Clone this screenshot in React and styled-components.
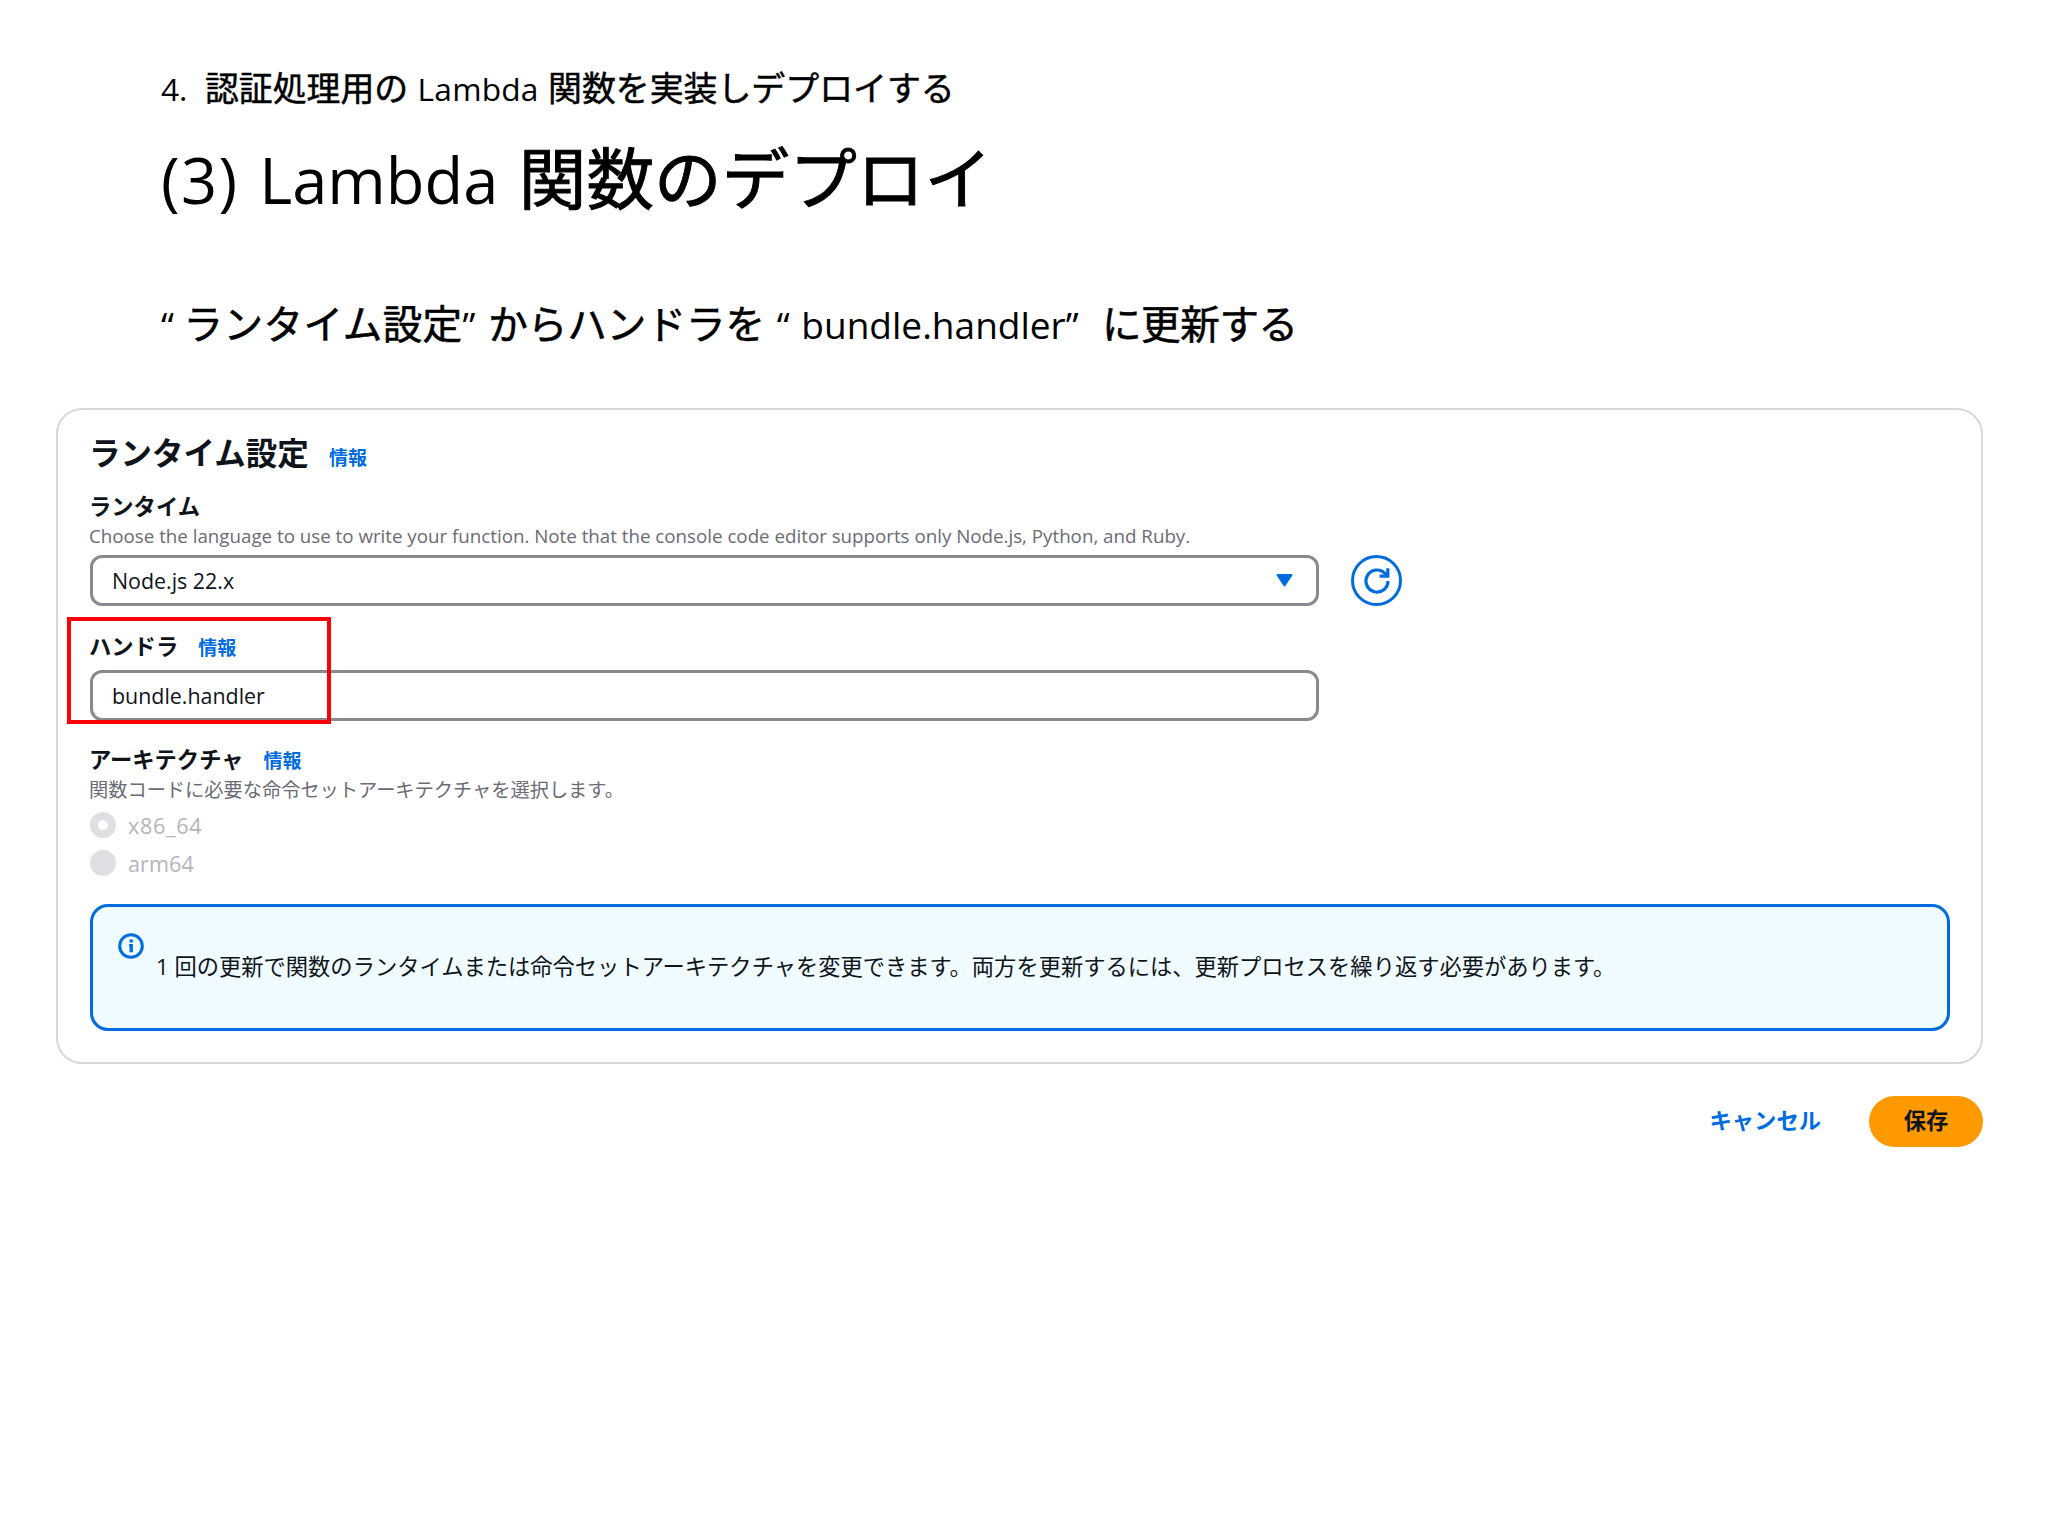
import React from 'react'
import styled, { createGlobalStyle } from 'styled-components';

const GlobalStyle = createGlobalStyle`
*{
box-sizing:border-box;
}
body{
margin:0;
background:#fff;
font-family:"Open Sans", "Noto Sans CJK JP", sans-serif;
}
`;

const Slide = styled.div`
display:flex;
flex-direction:column;
width:2048px;
height:1536px;
background:#fff;
overflow:hidden;
`;

const SlideHeader = styled.header`
display:flex;
flex-direction:column;
height:408px;
padding:62px 0 0 161px;
color:#000;
`;

const Chapter = styled.div`
height:50px;
line-height:50px;
font-size:33.9px;
white-space:pre;
`;

const Title = styled.h1`
margin:13px 0 0;
height:100px;
line-height:100px;
font-size:67.6px;
font-weight:400;
white-space:pre;
`;

const Lead = styled.p`
margin:67px 0 0;
height:60px;
line-height:60px;
font-size:39.6px;
white-space:pre;
`;

// latin runs are set slightly smaller than the kana next to them
const Latin = styled.span`
font-size:0.935em;
letter-spacing:${(props) => props.$track || 0}px;
word-spacing:${(props) => props.$word || 0}px;
`;

const Kana = styled.span`
font-family:"Noto Sans CJK JP", sans-serif;
letter-spacing:${(props) => props.$track || 0}px;
-webkit-text-stroke:0.014em #000;
`;

const Panel = styled.section`
display:flex;
flex-direction:column;
width:1927px;
height:656px;
margin-left:56px;
padding:21px 32px 0;
border:2px solid #d8d8dc;
border-radius:26px;
color:#0f141a;
`;

const PanelTitle = styled.h2`
display:flex;
align-items:baseline;
margin:0 0 0 -1px;
height:44px;
line-height:44px;
font-size:31.5px;
font-weight:700;
`;

const InfoLink = styled.a`
margin-left:20px;
font-size:19px;
font-weight:700;
color:#006ce0;
`;

const Field = styled.div`
position:relative;
display:flex;
flex-direction:column;
margin-top:${(props) => props.$gap}px;
`;

const Label = styled.div`
display:flex;
align-items:baseline;
height:32px;
line-height:32px;
margin-left:-1px;
font-size:22.3px;
font-weight:700;
`;

const Hint = styled.div`
height:27px;
line-height:27px;
margin-top:${(props) => props.$gap || 0}px;
margin-left:-1px;
font-size:${(props) => props.$size}px;
color:#6b6b75;
white-space:nowrap;
`;

const ControlRow = styled.div`
display:flex;
align-items:center;
gap:32px;
margin-top:${(props) => props.$gap}px;
`;

const Control = styled.div`
display:flex;
align-items:center;
justify-content:space-between;
width:1229px;
height:51px;
padding:0 23px 1px 19px;
border:3px solid #8a8a8e;
border-radius:12px;
font-size:21.4px;
color:#0f141a;
`;

const RefreshButton = styled.button`
display:flex;
align-items:center;
justify-content:center;
width:51px;
height:51px;
padding:0;
border:3px solid #006ce0;
border-radius:50%;
background:#fff;
`;

const Highlight = styled.div`
position:absolute;
left:-23px;
top:-14px;
width:264px;
height:107px;
border:4px solid #fb0007;
`;

const RadioGroup = styled.div`
display:flex;
flex-direction:column;
margin-top:3px;
`;

const RadioRow = styled.div`
display:flex;
align-items:center;
gap:12px;
height:38px;
font-size:21.6px;
letter-spacing:${(props) => props.$track || 0}px;
color:#b4b4bb;
`;

const Radio = styled.span`
width:26px;
height:26px;
border-radius:50%;
border:${(props) => (props.$checked ? '8px' : '13px')} solid #dedee3;
background:#fff;
`;

const Alert = styled.div`
display:flex;
width:1860px;
height:127px;
margin-top:22px;
padding:26px 25px;
border:3px solid #006ce0;
border-radius:18px;
background:#f0fbff;
`;

const AlertText = styled.p`
margin:16px 0 0 12px;
height:36px;
line-height:36px;
font-size:22.28px;
white-space:nowrap;
`;

const Actions = styled.div`
display:flex;
justify-content:flex-end;
align-items:center;
width:1983px;
margin-top:32px;
font-size:22.3px;
font-weight:700;
`;

const CancelButton = styled.button`
margin:0 48px 0 0;
padding:0 0 4px;
border:none;
background:none;
font:inherit;
color:#006ce0;
`;

const SaveButton = styled.button`
width:114px;
height:51px;
padding:0 0 4px;
border:none;
border-radius:26px;
background:#ff9900;
font:inherit;
color:#0f141a;
`;

const CaretIcon = () => (
    <svg width="17" height="13" viewBox="0 0 17 13">
        <path d="M1.5 1h14L8.5 11.5z" fill="#006ce0" stroke="#006ce0" strokeWidth="2" strokeLinejoin="round" />
    </svg>
);

const RefreshIcon = () => (
    <svg width="28" height="28" viewBox="0 0 28 28" fill="none" stroke="#006ce0" strokeWidth="3.2">
        <path d="M25 14a11 11 0 1 1-3.6-8.1l3 2.6" />
        <path d="M24.8 1.2v7.9h-8.2" />
    </svg>
);

const InfoIcon = () => (
    <svg width="26" height="26" viewBox="0 0 26 26" fill="none" stroke="#006ce0" strokeWidth="3">
        <circle cx="13" cy="13" r="11.3" />
        <path d="M13.2 11v8.2M13.2 6.4v3" strokeWidth="3.4" />
        <path d="M11 12h2" strokeWidth="2" />
    </svg>
);


export default function App() {
    return (
        <>
            <GlobalStyle />
            <Slide>
                <SlideHeader>
                    <Chapter>
                        <Latin $word={0.5}>4.  </Latin><Kana>認証処理用の</Kana><Latin $track={0.2} $word={0.9}> Lambda </Latin><Kana>関数を実装しデプロイする</Kana>
                    </Chapter>
                    <Title>
                        <Latin $track={1.4}>(3)</Latin><Latin $word={4.2}> Lambda </Latin><Kana>関数のデプロイ</Kana>
                    </Title>
                    <Lead>
                        <Latin>“ </Latin><Kana $track={0.4}>ランタイム設定</Kana><Latin $word={3}>” </Latin><Kana>からハンドラを</Kana><Latin $word={2}> “ bundle.handler”  </Latin><Kana $track={-0.4}>に更新する</Kana>
                    </Lead>
                </SlideHeader>
                <Panel>
                    <PanelTitle>ランタイム設定<InfoLink>情報</InfoLink></PanelTitle>
                    <Field $gap={16}>
                        <Label>ランタイム</Label>
                        <Hint $size={18.74} $gap={-1}>Choose the language to use to write your function. Note that the console code editor supports only Node.js, Python, and Ruby.</Hint>
                        <ControlRow $gap={6}>
                            <Control>Node.js 22.x<CaretIcon /></Control>
                            <RefreshButton><RefreshIcon /></RefreshButton>
                        </ControlRow>
                    </Field>
                    <Field $gap={25}>
                        <Label>ハンドラ<InfoLink>情報</InfoLink></Label>
                        <ControlRow $gap={7}>
                            <Control>bundle.handler</Control>
                        </ControlRow>
                        <Highlight />
                    </Field>
                    <Field $gap={23}>
                        <Label>アーキテクチャ<InfoLink>情報</InfoLink></Label>
                        <Hint $size={19.23}>関数コードに必要な命令セットアーキテクチャを選択します。</Hint>
                        <RadioGroup>
                            <RadioRow $track={0.7}><Radio $checked />x86_64</RadioRow>
                            <RadioRow $track={0.1}><Radio />arm64</RadioRow>
                        </RadioGroup>
                    </Field>
                    <Alert>
                        <InfoIcon />
                        <AlertText>1 回の更新で関数のランタイムまたは命令セットアーキテクチャを変更できます。両方を更新するには、更新プロセスを繰り返す必要があります。</AlertText>
                    </Alert>
                </Panel>
                <Actions>
                    <CancelButton>キャンセル</CancelButton>
                    <SaveButton>保存</SaveButton>
                </Actions>
            </Slide>
        </>
    )
}
